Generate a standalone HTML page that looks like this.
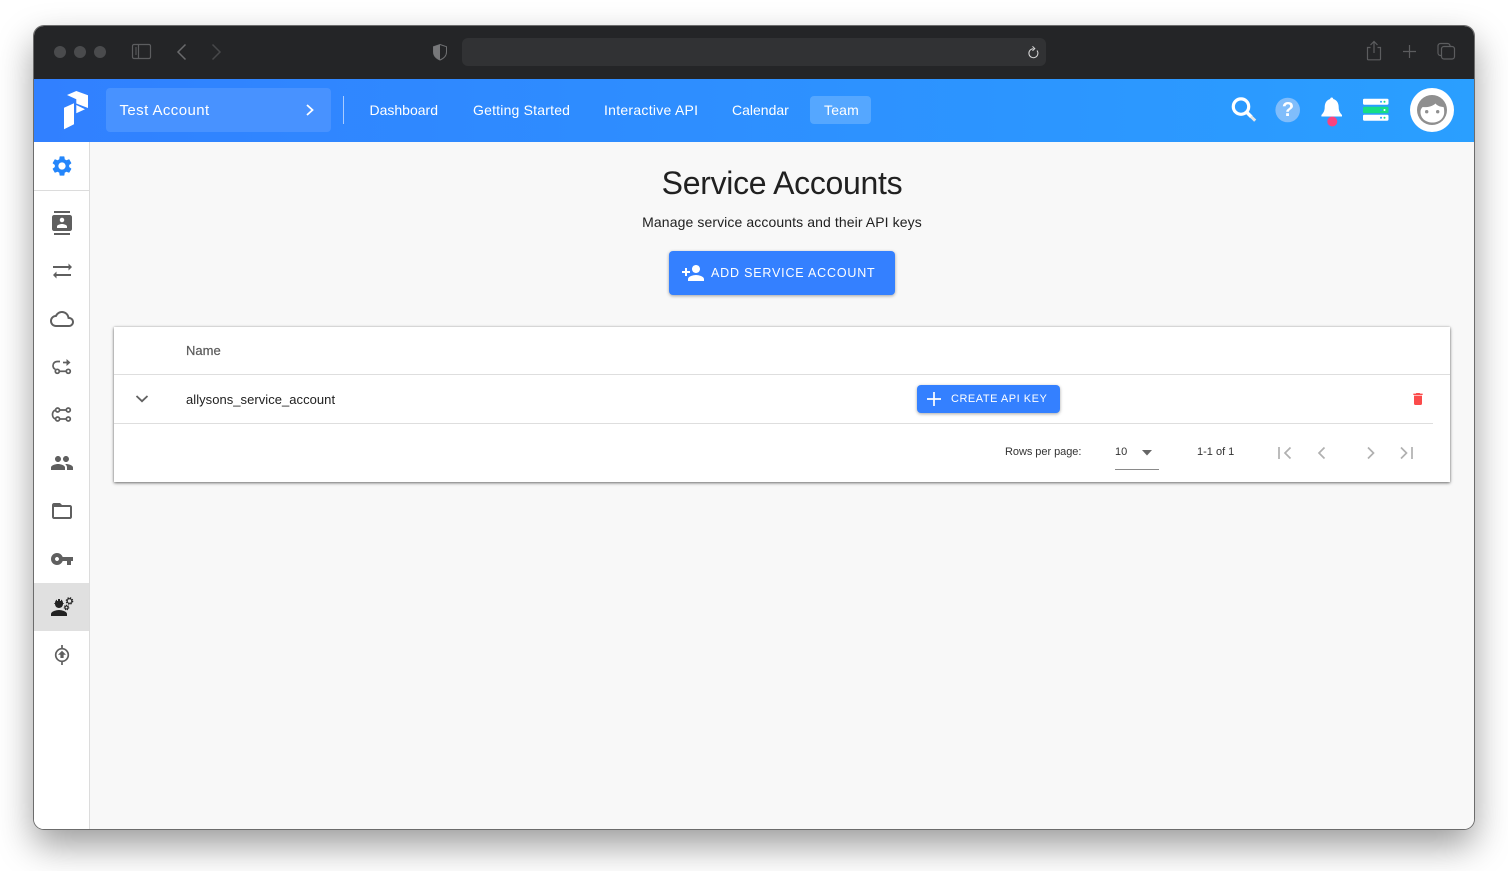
<!DOCTYPE html>
<html lang="en"><head><meta charset="utf-8"><title>Service Accounts</title>
<style>
*{box-sizing:border-box}
html,body{margin:0;padding:0;width:1508px;height:871px;overflow:hidden;background:#fff;font-family:"Liberation Sans",sans-serif}
#win{position:absolute;left:34px;top:26px;width:1440px;height:803px;border-radius:10px;box-shadow:0 0 0 1px #6c6c6c,0 16px 36px 0 rgba(0,0,0,.4);background:#fff}
.a{position:absolute;white-space:nowrap}
svg{position:absolute;display:block}
.nav{position:absolute;top:102px;font-size:14px;line-height:17px;color:#fff;white-space:nowrap}
</style></head><body>
<div id="win"></div>
<div style="position:absolute;left:34px;top:26px;width:1440px;height:803px;border-radius:10px;overflow:hidden;background:#f8f8f8" id="c">
<div class="a" style="left:0;top:0;width:1440px;height:53px;background:#242527"></div>
<div class="a" style="left:0;top:53px;width:1440px;height:63px;background:linear-gradient(90deg,#3180ff,#2a9fff)"></div>
<div class="a" style="left:0;top:116px;width:56px;height:687px;background:#fff;border-right:1px solid #dcdcdc"></div>
<div class="a" style="left:0;top:164px;width:56px;height:1px;background:#dcdcdc"></div>
<div class="a" style="left:0;top:557px;width:55px;height:48px;background:#e0e0e0"></div>
</div>

<!-- title bar -->
<svg style="left:0;top:0" width="1508" height="79" viewBox="0 0 1508 79" fill="none">
<circle cx="60" cy="52" r="6" fill="#4a4b4d"/><circle cx="80" cy="52" r="6" fill="#4a4b4d"/><circle cx="100" cy="52" r="6" fill="#4a4b4d"/>
<rect x="132.500" y="44.500" width="18" height="14" rx="1.500" stroke="#5c5d5f" stroke-width="1.200"/><path d="M138.500 44.500v14" stroke="#5c5d5f" stroke-width="1.200"/><path d="M135 48h2M135 50h2M135 52h2M135 54h2" stroke="#5c5d5f"/>
<path d="M185.500 44.500l-7.500 7.500 7.500 7.500" stroke="#6a6b6d" stroke-width="1.500"/>
<path d="M212.500 44.500l7.500 7.500-7.500 7.500" stroke="#47484a" stroke-width="1.500"/>
<path d="M440 44.500l6.500 2.200v5.300c0 4-3 6.500-6.500 8-3.500-1.500-6.500-4-6.500-8v-5.300z" stroke="#6f7072" stroke-width="1"/><path d="M440 44.500v15.500c-3.500-1.500-6.500-4-6.500-8v-5.300z" fill="#77787a"/>
<rect x="462" y="38" width="584" height="28" rx="6" fill="#313234"/>
<path d="M1037 50.500a4.500 4.500 0 1 1-3.500-1.800" stroke="#d8d8d8" stroke-width="1"/><path d="M1032.500 46.300l2.300 2.300-2.300 2.200" stroke="#d8d8d8" stroke-width="1"/>
<path d="M1370.500 47.500h-3v11.500a.8.8 0 0 0 .8.800h11.400a.8.8 0 0 0 .8-.8v-11.500h-3M1374 53v-11M1370.500 45l3.500-3.500 3.500 3.500" stroke="#5c5d5f" stroke-width="1.200"/>
<path d="M1403 51.500h13M1409.500 45v13" stroke="#5c5d5f" stroke-width="1.200"/>
<rect x="1441.500" y="46.500" width="13" height="12.500" rx="2.500" stroke="#5c5d5f" stroke-width="1.200"/><path d="M1441.500 55.500h-1a2.500 2.500 0 0 1-2.500-2.500v-7a2.500 2.500 0 0 1 2.500-2.500h7a2.500 2.500 0 0 1 2.500 2.500v.5" stroke="#5c5d5f" stroke-width="1.200"/>
</svg>

<!-- header -->
<svg style="left:58px;top:86px" width="36" height="48" viewBox="0 0 36 48"><path fill="#fff" d="M9 9L18.300 5 30 9.300V22L18.300 17.500V13.300zM6 21.700L16 17.300V38.300L6 43.300zM18.300 19L27 23.300 18.300 27.300z"/></svg>
<div class="a" style="left:106px;top:88px;width:225px;height:44px;border-radius:4px;background:#4892ff"></div>
<div class="a" style="left:119.500px;top:102px;font-size:15px;line-height:18px;color:#fff;letter-spacing:.42px">Test Account</div>
<svg style="left:304px;top:104px" width="12" height="12" viewBox="0 0 12 12"><path d="M3 1l5.500 5L3 11" fill="none" stroke="#fff" stroke-width="1.800"/></svg>
<div class="a" style="left:343px;top:96px;width:1px;height:28px;background:#a9ccff"></div>
<div class="nav" style="left:369.500px">Dashboard</div>
<div class="nav" style="left:473px;letter-spacing:.2px">Getting Started</div>
<div class="nav" style="left:604px;letter-spacing:.27px">Interactive API</div>
<div class="nav" style="left:732px">Calendar</div>
<div class="a" style="left:810px;top:96px;width:61px;height:28px;border-radius:4px;background:#55a7ff"></div>
<div class="nav" style="left:824px;letter-spacing:.2px">Team</div>

<svg style="left:1228px;top:88px" width="232" height="44" viewBox="0 0 232 44" fill="none"><g transform="translate(0 6)">
<circle cx="13" cy="12.600" r="7.700" stroke="#fff" stroke-width="3.200"/><path d="M19 18.500l4.500 4.500" stroke="#fff" stroke-width="3.400"/><path d="M23 22.500l4.200 4.200" stroke="#e6e6e6" stroke-width="3"/>
<circle cx="59.700" cy="16" r="12.300" fill="#80bdfb"/>
<circle cx="104.300" cy="27.500" r="5" fill="#f9437f"/>
<path d="M103.700 3.500c1 0 1.500.6 1.500 1.500 4 1 5.500 4.500 5.500 8.500 0 3.500 1.500 5.500 3.300 7.500v1.500h-20.600V21c1.800-2 3.300-4 3.300-7.500 0-4 1.500-7.500 5.500-8.500 0-.9.500-1.500 1.500-1.500z" fill="#fff"/>
<rect x="135" y="4.700" width="25.500" height="6" rx="1.200" fill="#fff"/><rect x="135" y="12.700" width="25.500" height="6.600" rx="1.200" fill="#16de85"/><rect x="135" y="20.700" width="25.500" height="6" rx="1.200" fill="#fff"/>
<circle cx="153" cy="7.700" r="1" fill="#2a9fff"/><circle cx="156.500" cy="7.700" r="1" fill="#16de85"/><circle cx="153" cy="16" r="1" fill="#2a9fff"/><circle cx="156.500" cy="16" r="1" fill="#fff"/><circle cx="153" cy="23.700" r="1" fill="#2a9fff"/><circle cx="156.500" cy="23.700" r="1" fill="#16de85"/>
<circle cx="204" cy="16" r="22" fill="#fff"/>
<circle cx="204" cy="16" r="15" fill="#8f8f8f"/>
<path d="M192.500 18c0-2.500 1-4 2.200-5 3.500.5 9 0 12.800-3.500 1.500 2 4 3.300 8 3.500.5 1 .7 3 .7 5 0 6.500-5.200 10.500-11.700 10.500s-12-4-12-10.500z" fill="#fff"/>
<circle cx="198.700" cy="17.700" r="1.700" fill="#8f8f8f"/><circle cx="209.700" cy="17.700" r="1.700" fill="#8f8f8f"/>
</g></svg>
<div class="a" style="left:1275px;top:98px;width:26px;text-align:center;color:#fff;font-weight:700;font-size:20px;line-height:24px">?</div>

<!-- sidebar -->
<svg style="left:50px;top:154px" width="24" height="24" viewBox="0 0 24 24"><path fill="#2486fb" d="M19.140 12.940c.04-.3.06-.61.06-.94 0-.32-.02-.64-.07-.94l2.030-1.580c.18-.14.23-.41.12-.61l-1.920-3.320c-.12-.22-.37-.29-.59-.22l-2.390.96c-.5-.38-1.030-.7-1.620-.94l-.36-2.540c-.04-.24-.24-.41-.48-.41h-3.840c-.24 0-.43.17-.47.41l-.36 2.540c-.59.24-1.130.57-1.620.94l-2.390-.96c-.22-.08-.47 0-.59.22L2.740 8.870c-.12.21-.08.47.12.61l2.030 1.580c-.05.3-.09.63-.09.94s.02.64.07.94l-2.030 1.580c-.18.14-.23.41-.12.61l1.920 3.320c.12.22.37.29.59.22l2.390-.96c.5.38 1.030.7 1.620.94l.36 2.540c.05.24.24.41.48.41h3.840c.24 0 .44-.17.47-.41l.36-2.540c.59-.24 1.130-.56 1.620-.94l2.390.96c.22.08.47 0 .59-.22l1.920-3.320c.12-.22.07-.47-.12-.61l-2.010-1.580zM12 15.600c-1.980 0-3.600-1.620-3.600-3.600s1.620-3.600 3.600-3.600 3.600 1.620 3.600 3.600-1.620 3.600-3.600 3.600z"/></svg>
<svg style="left:50px;top:211px" width="24" height="24" viewBox="0 0 24 24"><path fill="#5f5f5f" d="M20 0H4v2h16V0zM4 24h16v-2H4v2zM20 4H4c-1.100 0-2 .9-2 2v12c0 1.100.9 2 2 2h16c1.100 0 2-.9 2-2V6c0-1.100-.9-2-2-2zm-8 2.750c1.240 0 2.250 1.010 2.250 2.250s-1.010 2.250-2.250 2.250S9.750 10.240 9.750 9 10.760 6.750 12 6.750zM17 17H7v-1.500c0-1.670 3.330-2.500 5-2.500s5 .83 5 2.500V17z"/></svg>
<svg style="left:50px;top:259px" width="24" height="24" viewBox="0 0 24 24"><path fill="#5f5f5f" d="M3 7h15.500V4.500L22 8l-3.500 3.500V9H3zM21 15H6.500v-2.500L3 16l3.500 3.500V17H21z"/></svg>
<svg style="left:50px;top:307px" width="24" height="24" viewBox="0 0 24 24"><path fill="#5f5f5f" d="M19.350 10.040C18.670 6.590 15.640 4 12 4 9.110 4 6.600 5.640 5.350 8.040 2.340 8.360 0 10.910 0 14c0 3.310 2.690 6 6 6h13c2.760 0 5-2.240 5-5 0-2.640-2.050-4.780-4.650-4.960zM19 18H6c-2.210 0-4-1.790-4-4 0-2.050 1.530-3.760 3.560-3.970l1.070-.11.5-.95C8.080 7.140 9.940 6 12 6c2.620 0 4.880 1.860 5.390 4.430l.3 1.500 1.530.11c1.560.1 2.780 1.410 2.780 2.960 0 1.650-1.350 3-3 3z"/></svg>
<svg style="left:50px;top:355px" width="24" height="24" viewBox="0 0 24 24" fill="none" stroke="#5f5f5f" stroke-width="1.700"><path d="M10 6.500H7.500C4.500 6.500 3 8.500 3 10.700c0 1.500.8 2.800 2.300 3.600"/><circle cx="7.300" cy="16.300" r="2"/><circle cx="18.300" cy="16.300" r="2"/><path d="M9.300 16.300h7"/><path d="M13 7.500h4"/><path d="M16.500 4l4 3.500-4 3.500z" fill="#5f5f5f" stroke="none"/></svg>
<svg style="left:50px;top:403px" width="24" height="24" viewBox="0 0 24 24" fill="none" stroke="#5f5f5f" stroke-width="1.700"><circle cx="7.600" cy="7" r="2"/><circle cx="18.300" cy="7" r="2"/><path d="M9.600 7h6.700M5.600 7C3.500 7.500 2.500 9.500 2.500 11.500s1 4 3.100 4.500"/><circle cx="7.600" cy="16" r="2"/><circle cx="18.300" cy="16" r="2"/><path d="M9.600 16h6.700"/></svg>
<svg style="left:50px;top:451px" width="24" height="24" viewBox="0 0 24 24"><path fill="#5f5f5f" d="M16 11c1.660 0 2.990-1.340 2.990-3S17.660 5 16 5c-1.660 0-3 1.340-3 3s1.340 3 3 3zm-8 0c1.660 0 2.990-1.340 2.990-3S9.660 5 8 5C6.340 5 5 6.340 5 8s1.340 3 3 3zm0 2c-2.330 0-7 1.170-7 3.500V19h14v-2.500c0-2.330-4.670-3.500-7-3.500zm8 0c-.29 0-.62.02-.97.05 1.160.84 1.970 1.970 1.970 3.450V19h6v-2.500c0-2.330-4.670-3.500-7-3.500z"/></svg>
<svg style="left:50px;top:499px" width="24" height="24" viewBox="0 0 24 24"><path fill="#5f5f5f" d="M20 6h-8l-2-2H4c-1.100 0-1.990.9-1.990 2L2 18c0 1.100.9 2 2 2h16c1.100 0 2-.9 2-2V8c0-1.100-.9-2-2-2zm0 12H4V8h16v10z"/></svg>
<svg style="left:50px;top:547px" width="24" height="24" viewBox="0 0 24 24"><path fill="#5f5f5f" d="M12.650 10C11.830 7.670 9.610 6 7 6c-3.310 0-6 2.690-6 6s2.690 6 6 6c2.610 0 4.830-1.670 5.650-4H17v4h4v-4h2v-4H12.650zM7 14c-1.100 0-2-.9-2-2s.9-2 2-2 2 .9 2 2-.9 2-2 2z"/></svg>
<svg style="left:50px;top:595px" width="24" height="24" viewBox="0 0 24 24" fill="none"><path fill="#222" d="M9 15c-2.670 0-8 1.340-8 4v2h16v-2c0-2.660-5.330-4-8-4z"/><path fill="#222" d="M4.740 9H5c0 2.210 1.790 4 4 4s4-1.790 4-4h.26c.27 0 .49-.22.49-.49v-.02c0-.27-.22-.49-.49-.49H13c0-1.480-.81-2.750-2-3.450V5.500c0 .28-.22.5-.5.5s-.5-.22-.5-.5V4.140C9.680 4.060 9.350 4 9 4s-.68.06-1 .14V5.500c0 .28-.22.5-.5.5S7 5.780 7 5.500v-.95C5.810 5.250 5 6.520 5 8h-.26c-.27 0-.49.22-.49.49v.03c0 .26.22.48.49.48z"/><circle cx="19.500" cy="6" r="2.300" stroke="#222" stroke-width="1.100"/><circle cx="19.500" cy="6" r="3.200" stroke="#222" stroke-width="1.200" stroke-dasharray="1.400 1.110"/><circle cx="16.500" cy="12.500" r="1.500" stroke="#222" stroke-width="1"/><circle cx="16.500" cy="12.500" r="2.300" stroke="#222" stroke-width="1" stroke-dasharray="1.100 .9"/></svg>
<svg style="left:50px;top:643px" width="24" height="24" viewBox="0 0 24 24" fill="none"><circle cx="12" cy="12" r="6.300" stroke="#5f5f5f" stroke-width="1.700"/><path d="M12 2v4M12 18v4" stroke="#5f5f5f" stroke-width="1.700"/><path d="M12 7.800l4 4h-2.400v3.200h-3.200v-3.200H8z" fill="#5f5f5f"/></svg>

<!-- content -->
<div class="a" style="left:532px;width:500px;top:164px;text-align:center;font-size:32px;line-height:38px;color:#212121;letter-spacing:-.3px">Service Accounts</div>
<div class="a" style="left:532px;width:500px;top:214px;text-align:center;font-size:14px;line-height:17px;color:#212121;letter-spacing:.1px">Manage service accounts and their API keys</div>
<div class="a" style="left:669px;top:251px;width:226px;height:44px;border-radius:4px;background:#3480ff;box-shadow:0 1px 3px rgba(0,0,0,.35)"></div>
<svg style="left:681px;top:261px" width="24" height="24" viewBox="0 0 24 24"><path fill="#fff" d="M15 12c2.210 0 4-1.790 4-4s-1.790-4-4-4-4 1.790-4 4 1.790 4 4 4zm-9-2V7H4v3H1v2h3v3h2v-3h3v-2H6zm9 4c-2.670 0-8 1.340-8 4v2h16v-2c0-2.660-5.330-4-8-4z"/></svg>
<div class="a" style="left:711px;top:265px;font-size:12.500px;line-height:16px;color:#fff;letter-spacing:.81px">ADD SERVICE ACCOUNT</div>

<div class="a" style="left:114px;top:327px;width:1336px;height:155px;background:#fff;box-shadow:0 1px 3px rgba(0,0,0,.55),0 0 2px rgba(0,0,0,.15)"></div>
<div class="a" style="left:186px;top:343px;font-size:13px;line-height:15px;color:#5a5a5a;-webkit-text-stroke:.2px #5a5a5a">Name</div>
<div class="a" style="left:114px;top:374px;width:1336px;height:1px;background:#dedede"></div>
<svg style="left:130px;top:387px" width="24" height="24" viewBox="0 0 24 24"><path d="M6.500 9l5.500 5.200L17.500 9" fill="none" stroke="#616161" stroke-width="1.800"/></svg>
<div class="a" style="left:186px;top:392px;font-size:13px;line-height:15px;color:#212121;letter-spacing:.04px">allysons_service_account</div>
<div class="a" style="left:917px;top:385px;width:143px;height:28px;border-radius:4px;background:#3480ff;box-shadow:0 1px 3px rgba(0,0,0,.35)"></div>
<svg style="left:926px;top:391px" width="16" height="16" viewBox="0 0 16 16"><path d="M8 1v14M1 8h14" stroke="#fff" stroke-width="1.700"/></svg>
<div class="a" style="left:951px;top:392px;font-size:11px;line-height:14px;color:#fff;letter-spacing:.52px">CREATE API KEY</div>
<svg style="left:1410px;top:391px" width="16" height="16" viewBox="0 0 24 24"><path fill="#fb4b4b" d="M6 19c0 1.100.9 2 2 2h8c1.100 0 2-.9 2-2V7H6v12zM19 4h-3.500l-1-1h-5l-1 1H5v2h14V4z"/></svg>
<div class="a" style="left:114px;top:423px;width:1319px;height:1px;background:#dedede"></div>
<div class="a" style="left:1005px;top:446px;font-size:11px;line-height:13px;color:#333;letter-spacing:-.05px">Rows per page:</div>
<div class="a" style="left:1115px;top:446px;font-size:11px;line-height:13px;color:#333">10</div>
<svg style="left:1141px;top:450px" width="12" height="6" viewBox="0 0 12 6"><path d="M1 0h10L6 5.500z" fill="#666"/></svg>
<div class="a" style="left:1115px;top:469px;width:44px;height:1px;background:#8a8a8a"></div>
<div class="a" style="left:1197px;top:446px;font-size:11px;line-height:13px;color:#333">1-1 of 1</div>
<svg style="left:1270px;top:440px" width="150" height="26" viewBox="0 0 150 26" fill="none" stroke="#b0b0b0" stroke-width="1.700"><path d="M9 7v12M20.500 7.500L15 13l5.500 5.500"/><path d="M54.500 7.500L49 13l5.500 5.500"/><path d="M98 7.500l5.500 5.500-5.500 5.500"/><path d="M131 7.500l5.500 5.500-5.500 5.500M142 7v12"/></svg>
</body></html>
